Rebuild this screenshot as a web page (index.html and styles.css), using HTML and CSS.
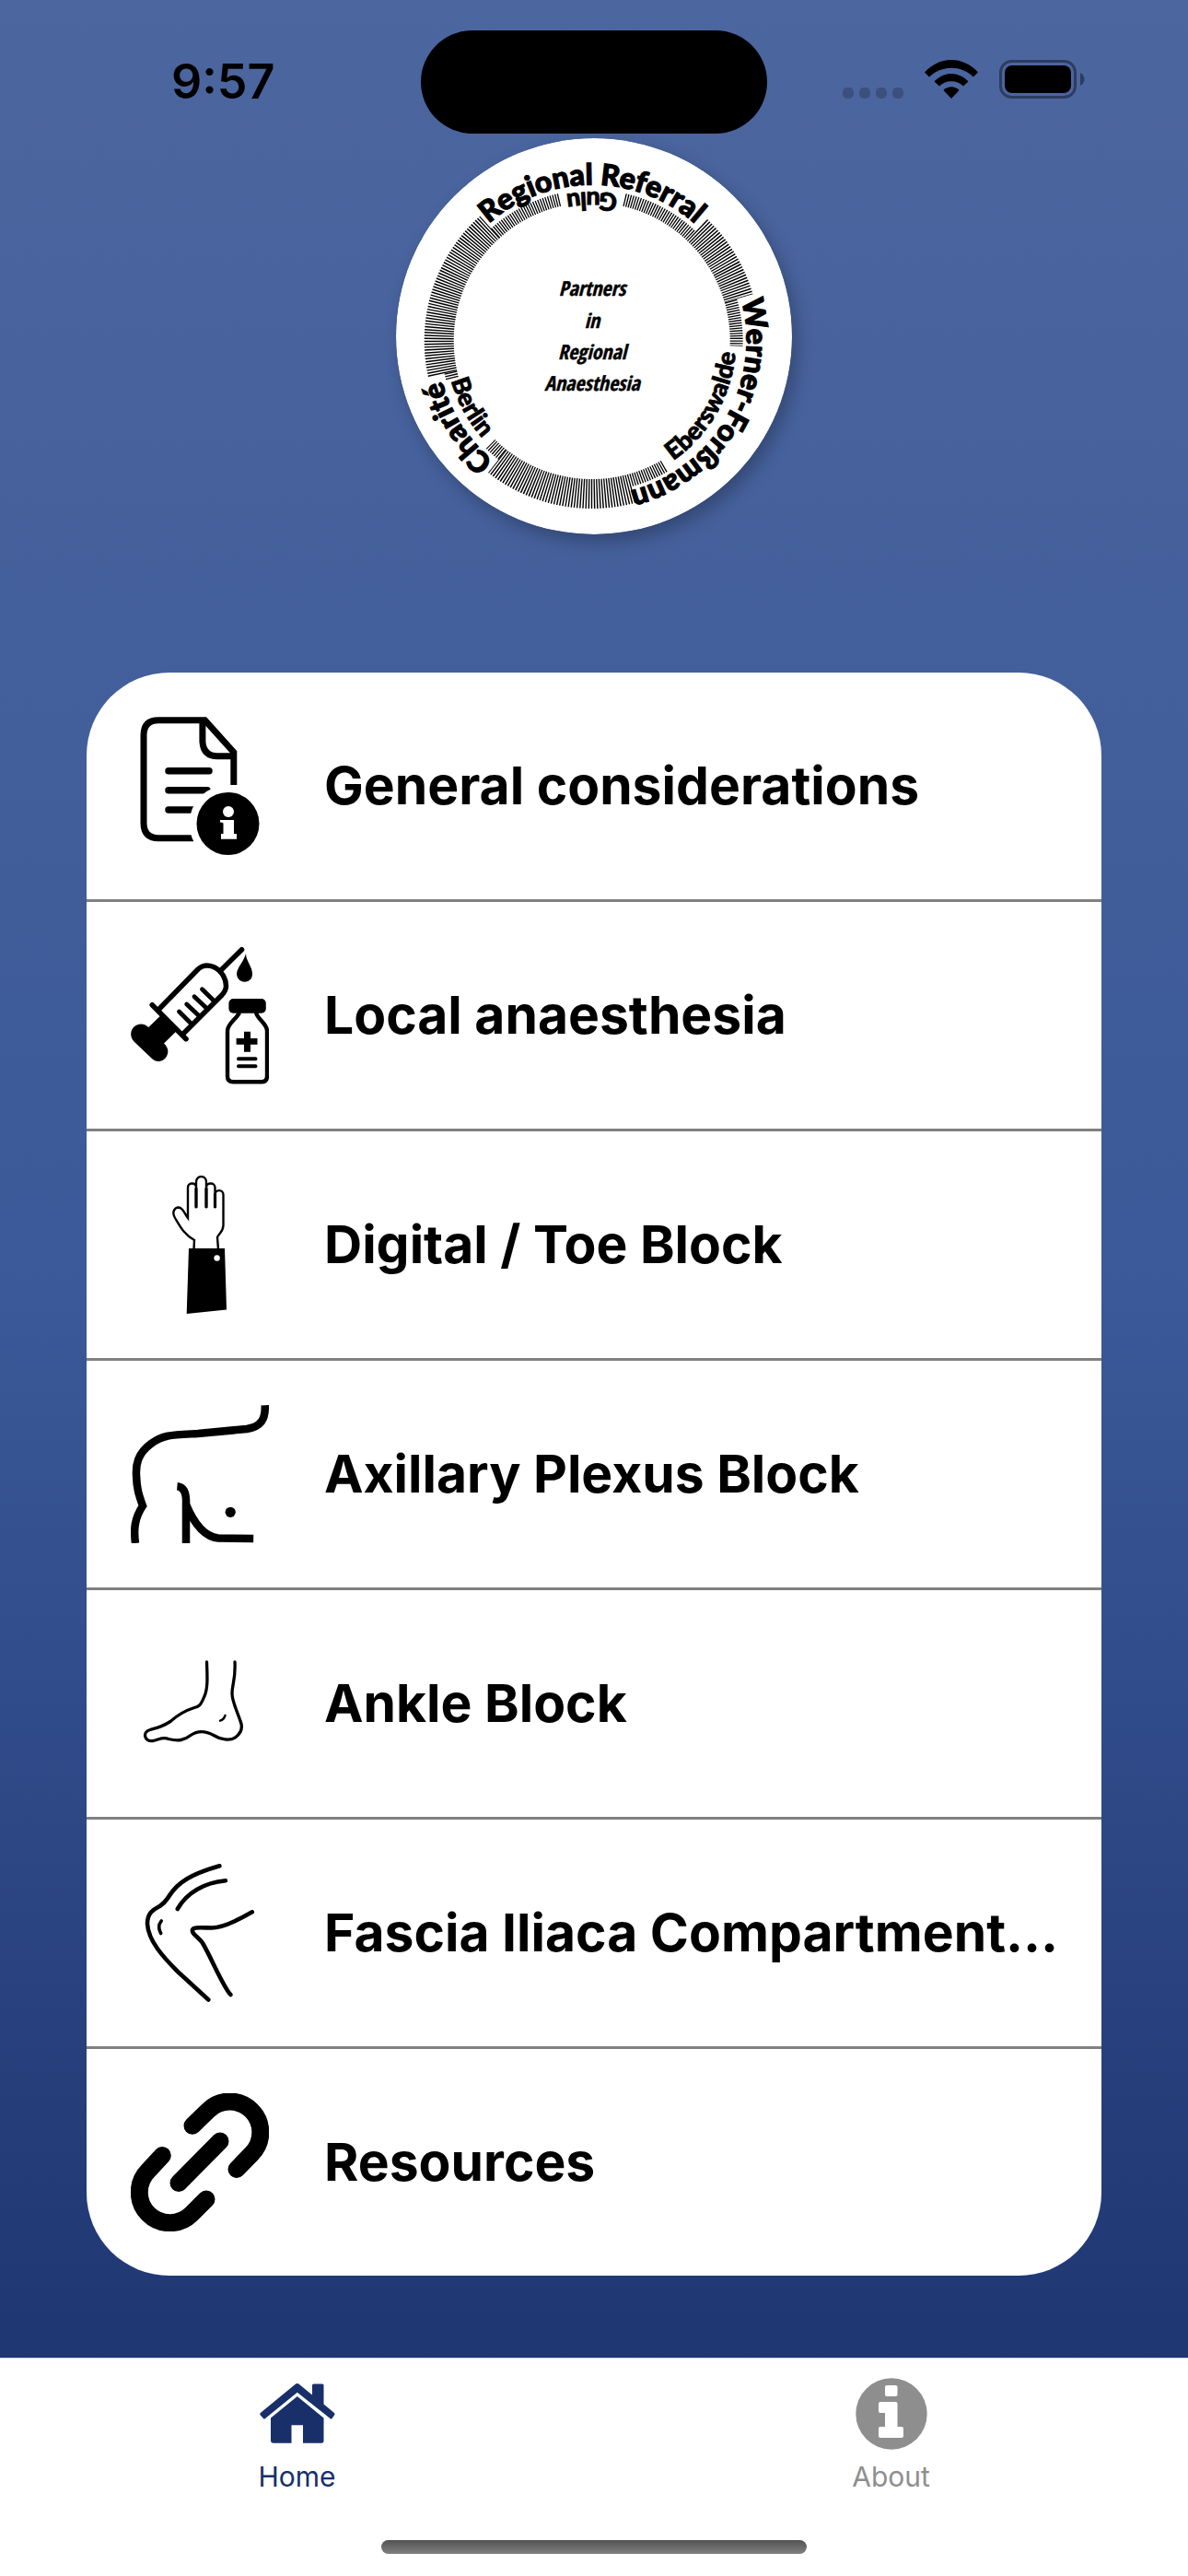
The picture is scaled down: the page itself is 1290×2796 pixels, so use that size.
FILE: index.html
```html
<!DOCTYPE html>
<html lang="en">
<head>
  <meta charset="UTF-8">
  <meta name="viewport" content="width=device-width, initial-scale=1">
  <title>Partners in Regional Anaesthesia</title>
  <link rel="stylesheet" href="styles.css">
</head>
<body>
<div class="app">
  <div class="status">
    <span class="time">9:57</span>
    <span class="island"></span>
    <div class="signals">
      <svg class="dots" viewBox="0 0 66 12"><rect width="12" height="12" rx="5"/><rect x="18" width="12" height="12" rx="5"/><rect x="36" width="12" height="12" rx="5"/><rect x="54" width="12" height="12" rx="5"/></svg>
      <svg class="wifi" viewBox="0 0 58 42"><path d="M0 13.5C16-4.5 42-4.5 58 13.5L53 18.5C39.5 5.5 18.5 5.5 5 18.5Z"/><path d="M10.5 23.5C21 12 37 12 47.5 23.5L42 28.5C35 21.5 23 21.5 16 28.5Z"/><path d="M20.5 33C25 28 33 28 37.5 33L29 42Z"/></svg>
      <svg class="battery" viewBox="0 0 93 42"><rect class="shell" x="1.5" y="1.5" width="81" height="39" rx="12"/><rect x="6" y="6" width="72" height="30" rx="8"/><path class="nub" d="M88 14C94 17 94 25 88 28Z"/></svg>
    </div>
  </div>

  <header>
    <svg class="logo" viewBox="0 0 430 430" role="img" aria-label="Partners in Regional Anaesthesia">
      <defs>
        <path id="arc-top" d="M103.4 90.7A169 169 0 0 1 322 90.7"/>
        <path id="arc-gulu" d="M293.7 80A162 162 0 0 0 131.7 80"/>
        <path id="arc-werner" d="M371.7 166A168 168 0 0 1 244 385"/>
        <path id="arc-ebers" d="M231.3 376.7A158 158 0 0 0 357 159"/>
        <path id="arc-berlin" d="M54.4 206A159 159 0 0 0 139 361"/>
        <path id="arc-charite" d="M152 377A168 168 0 0 1 46.8 192"/>
      </defs>
      <circle class="disc" cx="215" cy="215" r="215"/>
      <!-- wide ticks -->
      <g class="ring wide">
        <path d="M50.6 255.6A166 166 0 0 1 101.8 96.4"/>
        <path d="M327 99.6A166 166 0 0 1 372.1 173.7"/>
        <path d="M256.2 380.2A166 166 0 0 1 110 350.5"/>
      </g>
      <!-- narrow ticks -->
      <g class="ring narrow">
        <path d="M107.6 103.3A157 157 0 0 1 178.2 66.8"/>
        <path d="M248 67A157 157 0 0 1 320.8 106.1"/>
        <path d="M363.6 176.7A157 157 0 0 1 369.6 225.5"/>
        <path d="M291.2 356A157 157 0 0 1 253.9 371.5"/>
        <path d="M115.6 343.4A157 157 0 0 1 102.7 332"/>
        <path d="M61 260.6A157 157 0 0 1 59.4 253.7"/>
      </g>
      <g class="outer">
        <text><textPath href="#arc-top" startOffset="50%">Regional Referral</textPath></text>
        <text><textPath href="#arc-werner" startOffset="50%">Werner-Forßmann</textPath></text>
        <text><textPath href="#arc-charite" startOffset="46%">Charité</textPath></text>
      </g>
      <g class="inner">
        <text><textPath href="#arc-gulu" startOffset="50%">Gulu</textPath></text>
        <text><textPath href="#arc-ebers" startOffset="50%">Eberswalde</textPath></text>
        <text><textPath href="#arc-berlin" startOffset="50%">Berlin</textPath></text>
      </g>
      <g class="motto">
        <text x="213" y="171">Partners</text>
        <text x="213" y="206">in</text>
        <text x="213" y="240">Regional</text>
        <text x="213" y="274">Anaesthesia</text>
      </g>
    </svg>
  </header>

  <main>
    <ul class="menu">
      <li><a href="#general">
        <svg class="icon" viewBox="0 0 150 150">
          <g class="line" stroke-width="7"><path d="M68 131.7H30Q14 131.7 14 115V20Q14 3.7 30 3.7H80.5L111.8 38.5V74"/><path d="M77.9 5V27Q79 42.7 94 42.7H111"/></g>
          <g class="line round" stroke-width="7.5"><path d="M41 58.7H85M41 79.7H83M41 101H68"/></g>
          <circle class="paper" cx="105.5" cy="116" r="42"/><circle cx="105.5" cy="116" r="34"/>
          <circle class="paper" cx="106" cy="103" r="6"/><path class="paper" d="M97 112H112V127H115V132.7H98V127H100.5V115.5Q99 114.5 97 114.5Z"/>
        </svg>
        <span>General considerations</span>
      </a></li>
      <li><a href="#local">
        <svg class="icon" viewBox="0 0 150 150">
          <g class="line round" stroke-width="5.5"><path d="M120.5 3.7L98 26M31 68L73 25Q80 18.5 90 22.5C100 27 103.5 37 103.5 43Q103.5 48 99 53L56 96"/><path d="M23.2 63.7L60 100.7"/></g>
          <g class="line round" stroke-width="4.8"><path d="M77.5 46.7L90 59M69 54.7L82 67M60.7 63L74 75.5M52.5 71L65 83.5"/></g>
          <path d="M32.5 75.3L49.6 92.3L36 105.5C42 111 41 117 38 121C34 126 27 126 23 122L4 104C0 100-1 95 1.5 90C5 84 13 82 19.3 88Z"/>
          <path d="M125 8C125 16 132 22 132 30C132 36 128 38.7 123.5 38.7C119 38.7 115 35 115 29.5C116 22 122 18 125 8Z"/>
          <rect x="106.4" y="57" width="40.4" height="15.7" rx="5"/>
          <path class="line" stroke-width="4.4" d="M118 72C114 80 105 84 105 92V141Q105 147.3 111 147.3H142Q148 147.3 148 141V92C148 84 138 80 136 72"/>
          <path d="M123 92.7H130V100H137.5V106.7H130V114.7H123V106.7H114.6V100H123Z"/>
          <path class="line round" stroke-width="4" d="M117 122.3H135.5M117 130.3H135.5"/>
        </svg>
        <span>Local anaesthesia</span>
      </a></li>
      <li><a href="#digital">
        <svg class="icon" viewBox="0 0 150 150">
          <path class="line" stroke-width="2.4" d="M68.5 80L69 70C58 64 54 56 48 46C44 39 48 34.5 52 34.5C57 35 58 41 62 46V13C62 7 71 7 71 13V35V7C71-.8 82-.8 82 7V35V13C82 7 91.5 7 91.5 13V35V21C91.5 14.5 100.5 14.5 100.5 21V54C100 62 96 62 94 67L95 80"/>
          <path class="line round" stroke-width="3.2" d="M71 14V34M82 14V34M91.5 20V34"/>
          <path d="M63 79H102L104 145.5L60.7 150Z"/><circle class="paper" cx="93.6" cy="89.5" r="3.2"/>
        </svg>
        <span>Digital / Toe Block</span>
      </a></li>
      <li><a href="#axillary">
        <svg class="icon" viewBox="0 0 150 150">
          <g class="line" stroke-width="8.5"><path d="M145.7.3C146.5 16 141 23.5 126 26L73 31C45 32.5 36 32 22 42C7 53 5.5 65 6 76C6.5 92 9 98 13 109.5C4 123 3 135 5 150"/><path d="M50.4 88.3C59 89 60.5 98 60 108V150"/><path d="M60 108C68 127 80 143 95 144.5L133.2 145"/></g>
          <circle cx="108.2" cy="116.3" r="5.6"/>
        </svg>
        <span>Axillary Plexus Block</span>
      </a></li>
      <li><a href="#ankle">
        <svg class="icon" viewBox="0 0 150 150">
          <g class="line round" stroke-width="3.3"><path d="M82.5 29.8C83 45 84 58 80 67C76 77 74 78.5 69 79.5C55 84 48 90 43 94.5C33 101 26 102 21 103.5C12 106 15 117 24 115.5C31 114 35 111 41 113.5C52 116 58 115 65 109.5C72 104.5 81 104.5 90 109.5C97 114 108 116 114 111.5C121 106 121.5 100 119 94C115 82 110 73 110 64C110 54 114 49 113 29.8"/><path stroke-width="2.4" d="M102.5 88Q101 92.5 97 93.7"/></g>
        </svg>
        <span>Ankle Block</span>
      </a></li>
      <li><a href="#fascia">
        <svg class="icon" viewBox="0 0 150 150">
          <g class="line round" stroke-width="4.6"><path d="M96.4 2.3C75 8.5 57 15.5 46 29C37.5 40 39 41 31.5 46C26 49 18 52 18 65C19 84 36 102 51 117L84.3 147.5"/><path d="M102.9 18.3C80 20.5 61 31 50.7 49"/><path d="M131.8 52.3C115 62 98 69.5 88 69.5C78 69.5 67 68 67 72C66 76 74 80 78 86C88 103 100 133 108.4 142"/><path stroke-width="3.6" d="M33.2 62C30 66 30 71 32.7 75.5"/></g>
        </svg>
        <span>Fascia Iliaca Compartment…</span>
      </a></li>
      <li><a href="#resources">
        <svg class="icon" viewBox="0 0 150 150">
          <g class="line round" stroke-width="19"><path d="M67 35.3L84 18.7A33.2 33.2 0 0 1 131 66L115 82.5"/><path d="M97 52L52 97.5"/><path d="M34.3 67.5L19 84A33.2 33.2 0 0 0 66 131L82 115"/></g>
        </svg>
        <span>Resources</span>
      </a></li>
    </ul>
  </main>

  <nav class="tabbar">
    <div class="tabs">
      <a class="tab active" href="#home">
        <svg viewBox="0 0 82 78"><path d="M38.5 7Q40.8 5 43 7L57 18.5V8Q57 6.5 58.5 6.5H68Q69.5 6.5 69.5 8V28.5L81 38Q82 39 81 40.5L78.5 44Q77.5 45 76.5 44L40.8 15.7L6 44Q5 45 4 44L.8 40.5Q-.2 39 .8 38Z"/><path d="M40.8 20L69.5 43.5V68Q69.5 70.7 67 70.7H47V51.3H34.5V70.7H15Q12 70.7 12 68V43.5Z"/></svg>
        <span>Home</span>
      </a>
      <a class="tab" href="#about">
        <svg viewBox="-2 0 82 78"><circle cx="39" cy="39" r="38.7"/><g class="paper"><rect x="32" y="8" width="13.5" height="12" rx="2"/><path d="M27 26H43.5Q45.5 26 45.5 28V53H50Q52 53 52 55V63Q52 65 50 65H27Q25 65 25 63V55Q25 53 27 53H32V38H27Q25 38 25 36V28Q25 26 27 26Z"/></g></svg>
        <span>About</span>
      </a>
    </div>
    <div class="indicator"></div>
  </nav>
</div>
</body>
</html>
```
FILE: styles.css
```css
* {
  margin: 0;
  padding: 0;
  box-sizing: border-box;
}
body {
  font-family: Inter, "Liberation Sans", sans-serif;
  color: #000;
}
a {
  color: inherit;
  text-decoration: none;
}
svg {
  display: block;
  flex: none;
}
.app {
  min-height: 100vh;
  display: flex;
  flex-direction: column;
  background: linear-gradient(#4c669f, #3b5998 50%, #192f6a);
}

/* status bar */
.status {
  display: grid;
  grid-template-columns: 1fr 376px 1fr;
  align-items: center;
  padding-top: 33px;
}
.time {
  padding-left: 186px;
  font-size: 52px;
  line-height: 64px;
  font-weight: 600;
}
.island {
  height: 112px;
  border-radius: 56px;
  background: #000;
}
.signals {
  display: flex;
  justify-content: flex-end;
  align-items: flex-end;
  gap: 23px;
  padding: 0 112px 6px 0;
}
.dots {
  width: 66px;
  height: 12px;
  opacity: .2;
}
.wifi {
  width: 58px;
  height: 42px;
}
.battery {
  width: 93px;
  height: 42px;
}
.shell {
  fill: none;
  stroke: #000;
  stroke-width: 3;
  opacity: .4;
}
.nub {
  opacity: .4;
}

/* logo */
header {
  display: flex;
  justify-content: center;
  padding: 5px 0 150px;
}
.logo {
  width: 430px;
  height: 430px;
  border-radius: 50%;
  box-shadow: 6px 9px 18px rgba(0, 0, 0, .25);
}
.disc,
.paper {
  fill: #fff;
}
.ring {
  fill: none;
  stroke: #000;
}
.wide {
  stroke-width: 32;
  stroke-dasharray: 1.4 1.5;
}
.narrow {
  stroke-width: 14;
  stroke-dasharray: 1.3 1.4;
}
.outer,
.inner {
  font-family: Lato, sans-serif;
  font-weight: 900;
  text-anchor: middle;
  stroke: #000;
}
.outer {
  font-size: 32px;
  stroke-width: 1.2;
}
.inner {
  font-size: 27px;
  stroke-width: .8;
}
.motto {
  font-family: "Liberation Sans Narrow", "Open Sans Condensed", "DejaVu Sans Condensed", sans-serif;
  font-size: 22px;
  font-style: italic;
  text-anchor: middle;
  stroke: #000;
  stroke-width: .4;
}

/* menu card */
main {
  flex: 1;
  padding: 0 94px 89px;
}
.menu {
  list-style: none;
  border-radius: 90px;
  background: #fff;
  overflow: hidden;
}
.menu li + li {
  border-top: 3px solid #808080;
}
.menu a {
  display: flex;
  align-items: center;
  gap: 60px;
  padding: 48px 40px 48px 48px;
}
.menu span {
  font-size: 57px;
  line-height: 72px;
  font-weight: 700;
  white-space: nowrap;
}
.icon {
  width: 150px;
  height: 150px;
}
.line {
  fill: none;
  stroke: #000;
}
.round {
  stroke-linecap: round;
  stroke-linejoin: round;
}

/* bottom tabs */
.tabbar {
  padding: 21px 0 24px;
  border-top: 1px solid #d8d8d8;
  background: #fff;
}
.tabs {
  display: flex;
}
.tab {
  flex: 1;
  display: flex;
  flex-direction: column;
  align-items: center;
  gap: 11px;
  color: #8e8e8f;
  font-size: 30px;
  line-height: 36px;
}
.tab svg {
  width: 82px;
  height: 78px;
  fill: currentColor;
}
.tab .paper {
  fill: #fff;
}
.active {
  color: #192f6a;
}
.indicator {
  width: 462px;
  height: 15px;
  margin: 51px auto 0;
  border-radius: 8px;
  background: linear-gradient(#525252, #808080);
}
```
